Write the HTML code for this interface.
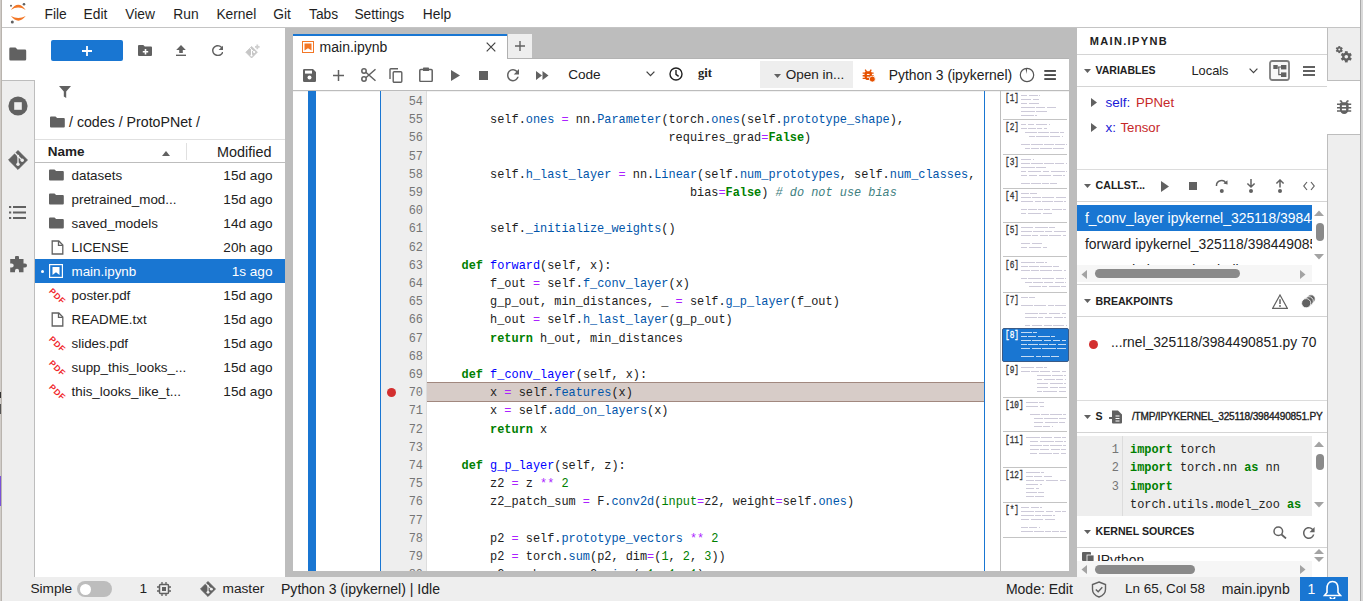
<!DOCTYPE html><html><head><meta charset="utf-8"><style>
html,body{margin:0;padding:0;}
body{width:1363px;height:601px;position:relative;overflow:hidden;background:#fff;font-family:"Liberation Sans",sans-serif;}
body div, body svg{position:absolute;}
body div svg{position:absolute;}
.cl{position:absolute;left:0;height:18.2px;line-height:18.2px;white-space:pre;font-family:"Liberation Mono",monospace;font-size:11.9px;color:#212121;}
.k{color:#008000;font-weight:bold}
.d{color:#0000ff}
.p{color:#0055aa}
.o{color:#aa22ff}
.n{color:#008000}
.c{color:#408080;font-style:italic}
.b{color:#008000}
</style></head><body>
<div style="left:0px;top:0px;width:1px;height:601px;background:#d0ccc8;"></div>
<div style="left:1px;top:0px;width:1px;height:601px;background:#b9b4ae;"></div>
<div style="left:1360px;top:0px;width:1px;height:601px;background:#a9a9a9;"></div>
<div style="left:1361px;top:0px;width:2px;height:601px;background:#d9d9d9;"></div>
<div style="left:0px;top:476px;width:1px;height:30px;background:#7a52d8;"></div>
<div style="left:0px;top:392px;width:1px;height:6px;background:#333;"></div>
<div style="left:0px;top:404px;width:1px;height:10px;background:#555;"></div>
<div style="left:2px;top:27px;width:1358px;height:1px;background:#c4c4c4;"></div>
<svg style="left:4px;top:0px;" width="28" height="28" viewBox="0 0 28 28">
<path d="M6.8 9.9 Q14.25 -0.4 21.7 9.9 Q14.25 5.2 6.8 9.9 Z" fill="#f37726"/>
<path d="M6.9 16.1 Q14.3 25.2 21.7 16.1 Q14.3 19.8 6.9 16.1 Z" fill="#f37726"/>
<circle cx="20" cy="4.2" r="1.3" fill="#616161"/>
<circle cx="7" cy="5.8" r="1" fill="#616161"/>
<circle cx="8.3" cy="21.9" r="1.5" fill="#616161"/>
</svg>
<div style="left:44.5px;top:4.72px;height:20px;line-height:20px;font-family:'Liberation Sans', sans-serif;font-size:13.8px;color:#1f1f1f;font-weight:normal;letter-spacing:0px;white-space:pre;text-align:left;">File</div>
<div style="left:83.6px;top:4.72px;height:20px;line-height:20px;font-family:'Liberation Sans', sans-serif;font-size:13.8px;color:#1f1f1f;font-weight:normal;letter-spacing:0px;white-space:pre;text-align:left;">Edit</div>
<div style="left:125.2px;top:4.72px;height:20px;line-height:20px;font-family:'Liberation Sans', sans-serif;font-size:13.8px;color:#1f1f1f;font-weight:normal;letter-spacing:0px;white-space:pre;text-align:left;">View</div>
<div style="left:173.3px;top:4.72px;height:20px;line-height:20px;font-family:'Liberation Sans', sans-serif;font-size:13.8px;color:#1f1f1f;font-weight:normal;letter-spacing:0px;white-space:pre;text-align:left;">Run</div>
<div style="left:216.4px;top:4.72px;height:20px;line-height:20px;font-family:'Liberation Sans', sans-serif;font-size:13.8px;color:#1f1f1f;font-weight:normal;letter-spacing:0px;white-space:pre;text-align:left;">Kernel</div>
<div style="left:273.3px;top:4.72px;height:20px;line-height:20px;font-family:'Liberation Sans', sans-serif;font-size:13.8px;color:#1f1f1f;font-weight:normal;letter-spacing:0px;white-space:pre;text-align:left;">Git</div>
<div style="left:309px;top:4.72px;height:20px;line-height:20px;font-family:'Liberation Sans', sans-serif;font-size:13.8px;color:#1f1f1f;font-weight:normal;letter-spacing:0px;white-space:pre;text-align:left;">Tabs</div>
<div style="left:354.4px;top:4.72px;height:20px;line-height:20px;font-family:'Liberation Sans', sans-serif;font-size:13.8px;color:#1f1f1f;font-weight:normal;letter-spacing:0px;white-space:pre;text-align:left;">Settings</div>
<div style="left:422.8px;top:4.72px;height:20px;line-height:20px;font-family:'Liberation Sans', sans-serif;font-size:13.8px;color:#1f1f1f;font-weight:normal;letter-spacing:0px;white-space:pre;text-align:left;">Help</div>
<div style="left:2px;top:80px;width:33px;height:497px;background:#eeeeee;"></div>
<div style="left:2px;top:80px;width:33px;height:1px;background:#bdbdbd;"></div>
<div style="left:34px;top:80px;width:1px;height:497px;background:#bdbdbd;"></div>
<svg style="left:9px;top:46px;" width="18" height="16" viewBox="0 0 18 16"><path d="M1.5 1.5 h5 l2 2 h7.5 a1.2 1.2 0 0 1 1.2 1.2 v8.6 a1.2 1.2 0 0 1 -1.2 1.2 h-14.5 a1.2 1.2 0 0 1 -1.2 -1.2 v-10.6 a1.2 1.2 0 0 1 1.2 -1.2z" fill="#616161"/></svg>
<svg style="left:8px;top:96px;" width="20" height="20" viewBox="0 0 20 20"><circle cx="10" cy="10" r="9.6" fill="#616161"/><rect x="6.2" y="6.2" width="7.6" height="7.6" fill="#eeeeee"/></svg>
<svg style="left:8px;top:150px;" width="20" height="20" viewBox="0 0 20 20"><path d="M10 0.6 L19.4 10 L10 19.4 L0.6 10 Z" fill="#616161" stroke="#616161" stroke-width="1" stroke-linejoin="round"/><path d="M6.8 2.8 L10 6 V14.2 M10 6 L14.2 10.2" stroke="#eeeeee" stroke-width="1.3" fill="none"/><circle cx="10" cy="6" r="1.2" fill="#eee"/><circle cx="10" cy="14.2" r="1.7" fill="#eee"/><circle cx="14.2" cy="10.2" r="1.7" fill="#eee"/></svg>
<svg style="left:9px;top:205px;" width="18" height="15" viewBox="0 0 18 15"><g fill="#616161"><rect x="0" y="1" width="2.2" height="2"/><rect x="4" y="1" width="13" height="2"/><rect x="0" y="6.5" width="2.2" height="2"/><rect x="4" y="6.5" width="13" height="2"/><rect x="0" y="12" width="2.2" height="2"/><rect x="4" y="12" width="13" height="2"/></g></svg>
<svg style="left:8px;top:256px;" width="19" height="19" viewBox="0 0 19 19"><path d="M7 1.5 a2 2 0 0 1 4 0 v1.5 h4.5 v4.5 h1.5 a2 2 0 0 1 0 4 h-1.5 v4.8 h-4.5 v-1.5 a2 2 0 0 0 -4 0 v1.5 h-4.8 v-4.8 h1.5 a2 2 0 0 0 0 -4 h-1.5 v-4.5 h4.8 z" fill="#616161"/></svg>
<div style="left:51px;top:40px;width:72px;height:21px;background:#1976d2;border-radius:2px;"></div>
<svg style="left:82px;top:46px;" width="10" height="10" viewBox="0 0 10 10"><path d="M5 0 V10 M0 5 H10" stroke="#fff" stroke-width="1.8"/></svg>
<svg style="left:138px;top:45px;" width="14" height="11" viewBox="0 0 14 11"><path d="M1 0 h4.3 l1.5 1.5 h6.2 a1 1 0 0 1 1 1 v7.5 a1 1 0 0 1 -1 1 h-12 a1 1 0 0 1 -1 -1 v-9 a1 1 0 0 1 1 -1z" fill="#616161"/><path d="M7.5 4 V9.4 M4.8 6.7 H10.2" stroke="#fff" stroke-width="1.6"/></svg>
<svg style="left:176px;top:45px;" width="10" height="11" viewBox="0 0 10 11"><path d="M5 0 L9.8 5 H6.8 V8 H3.2 V5 H0.2 Z" fill="#616161"/><rect x="0" y="9.6" width="10" height="1.4" fill="#616161"/></svg>
<svg style="left:211.5px;top:45.3px;" width="11.699999999999989" height="11.200000000000003" viewBox="4 4 16 16" preserveAspectRatio="none"><path d="M17.65 6.35A7.958 7.958 0 0 0 12 4c-4.42 0-7.99 3.58-7.99 8s3.57 8 7.99 8c3.73 0 6.84-2.55 7.73-6h-2.08A5.99 5.99 0 0 1 12 18c-3.31 0-6-2.69-6-6s2.69-6 6-6c1.66 0 3.14.69 4.22 1.78L13 11h7V4l-2.35 2.35z" fill="#616161" /></svg>
<svg style="left:245px;top:40px;" width="16" height="19" viewBox="0 0 16 19"><path d="M6.6 6.4 L12.4 12.2 L6.6 18 L0.8 12.2 Z" fill="#c6c6c6" stroke="#c6c6c6" stroke-width="0.8" stroke-linejoin="round"/><path d="M4.7 7.6 L6.5 9.4 V15.6 M6.5 9.4 L9.2 12.1" stroke="#fff" stroke-width="1" fill="none"/><circle cx="6.5" cy="15.5" r="1.1" fill="#fff"/><circle cx="9.2" cy="12.1" r="1.1" fill="#fff"/><path d="M12.3 4.6 V9.2 M10 6.9 H14.6" stroke="#cfcfcf" stroke-width="1.8"/></svg>
<svg style="left:59px;top:86px;" width="12" height="12" viewBox="0 0 12 12"><path d="M0 0 H12 L7.2 5.5 V12 L4.8 10.5 V5.5 Z" fill="#616161"/></svg>
<svg style="left:50px;top:116px;" width="15" height="12" viewBox="0 0 15 12"><path d="M1 0.5 h4.5 l1.6 1.6 h6.7 a1 1 0 0 1 1 1 v7.4 a1 1 0 0 1 -1 1 h-12.8 a1 1 0 0 1 -1 -1 v-9 a1 1 0 0 1 1 -1z" fill="#616161"/></svg>
<div style="left:69px;top:112.38px;height:20px;line-height:20px;font-family:'Liberation Sans', sans-serif;font-size:14.2px;color:#212121;font-weight:normal;letter-spacing:0px;white-space:pre;text-align:left;">/ codes / ProtoPNet /</div>
<div style="left:35px;top:139px;width:250px;height:1px;background:#e0e0e0;"></div>
<div style="left:35px;top:162px;width:250px;height:1px;background:#bdbdbd;"></div>
<div style="left:47.7px;top:141.92px;height:20px;line-height:20px;font-family:'Liberation Sans', sans-serif;font-size:13.5px;color:#212121;font-weight:bold;letter-spacing:0px;white-space:pre;text-align:left;">Name</div>
<svg style="left:162px;top:151px;" width="8" height="5" viewBox="0 0 8 5"><path d="M0 5 L4 0 L8 5 Z" fill="#616161"/></svg>
<div style="left:186px;top:143px;width:1px;height:17px;background:#e0e0e0;"></div>
<div style="left:217px;top:141.61px;height:20px;line-height:20px;font-family:'Liberation Sans', sans-serif;font-size:14.4px;color:#212121;font-weight:normal;letter-spacing:0px;white-space:pre;text-align:left;">Modified</div>
<svg style="left:49px;top:169px;" width="15" height="12" viewBox="0 0 15 12"><path d="M1 0.5 h4.5 l1.6 1.6 h6.7 a1 1 0 0 1 1 1 v7.4 a1 1 0 0 1 -1 1 h-12.8 a1 1 0 0 1 -1 -1 v-9 a1 1 0 0 1 1 -1z" fill="#616161"/></svg>
<div style="left:71.5px;top:165.66px;height:20px;line-height:20px;font-family:'Liberation Sans', sans-serif;font-size:13.4px;color:#212121;font-weight:normal;letter-spacing:0px;white-space:pre;text-align:left;">datasets</div>
<div style="left:180px;top:165.59px;width:92.5px;height:20px;line-height:20px;font-family:'Liberation Sans', sans-serif;font-size:13.6px;color:#212121;font-weight:normal;letter-spacing:0px;white-space:pre;text-align:right;">15d ago</div>
<svg style="left:49px;top:193px;" width="15" height="12" viewBox="0 0 15 12"><path d="M1 0.5 h4.5 l1.6 1.6 h6.7 a1 1 0 0 1 1 1 v7.4 a1 1 0 0 1 -1 1 h-12.8 a1 1 0 0 1 -1 -1 v-9 a1 1 0 0 1 1 -1z" fill="#616161"/></svg>
<div style="left:71.5px;top:189.66px;height:20px;line-height:20px;font-family:'Liberation Sans', sans-serif;font-size:13.4px;color:#212121;font-weight:normal;letter-spacing:0px;white-space:pre;text-align:left;">pretrained_mod...</div>
<div style="left:180px;top:189.59px;width:92.5px;height:20px;line-height:20px;font-family:'Liberation Sans', sans-serif;font-size:13.6px;color:#212121;font-weight:normal;letter-spacing:0px;white-space:pre;text-align:right;">15d ago</div>
<svg style="left:49px;top:217px;" width="15" height="12" viewBox="0 0 15 12"><path d="M1 0.5 h4.5 l1.6 1.6 h6.7 a1 1 0 0 1 1 1 v7.4 a1 1 0 0 1 -1 1 h-12.8 a1 1 0 0 1 -1 -1 v-9 a1 1 0 0 1 1 -1z" fill="#616161"/></svg>
<div style="left:71.5px;top:213.66px;height:20px;line-height:20px;font-family:'Liberation Sans', sans-serif;font-size:13.4px;color:#212121;font-weight:normal;letter-spacing:0px;white-space:pre;text-align:left;">saved_models</div>
<div style="left:180px;top:213.59px;width:92.5px;height:20px;line-height:20px;font-family:'Liberation Sans', sans-serif;font-size:13.6px;color:#212121;font-weight:normal;letter-spacing:0px;white-space:pre;text-align:right;">14d ago</div>
<svg style="left:51px;top:240px;" width="13" height="15" viewBox="0 0 13 15"><path d="M1.2 1 H7.8 L11.8 5 V14 H1.2 Z" fill="none" stroke="#616161" stroke-width="1.3"/><path d="M7.5 1 V5.3 H11.8" fill="none" stroke="#616161" stroke-width="1.3"/></svg>
<div style="left:71.5px;top:237.66px;height:20px;line-height:20px;font-family:'Liberation Sans', sans-serif;font-size:13.4px;color:#212121;font-weight:normal;letter-spacing:0px;white-space:pre;text-align:left;">LICENSE</div>
<div style="left:180px;top:237.59px;width:92.5px;height:20px;line-height:20px;font-family:'Liberation Sans', sans-serif;font-size:13.6px;color:#212121;font-weight:normal;letter-spacing:0px;white-space:pre;text-align:right;">20h ago</div>
<div style="left:35px;top:259px;width:250px;height:24px;background:#1976d2;"></div>
<div style="left:40.5px;top:269.5px;width:3px;height:3px;background:#fff;border-radius:50%;"></div>
<svg style="left:49px;top:264px;" width="14" height="14" viewBox="0 0 14 14"><rect x="0.6" y="0.6" width="12.8" height="12.8" fill="none" stroke="#fff" stroke-width="1.2"/><path d="M3.5 3 H10.5 V11 L7 8.2 L3.5 11 Z" fill="#fff"/></svg>
<div style="left:71.5px;top:261.66px;height:20px;line-height:20px;font-family:'Liberation Sans', sans-serif;font-size:13.4px;color:#ffffff;font-weight:normal;letter-spacing:0px;white-space:pre;text-align:left;">main.ipynb</div>
<div style="left:180px;top:261.59px;width:92.5px;height:20px;line-height:20px;font-family:'Liberation Sans', sans-serif;font-size:13.6px;color:#ffffff;font-weight:normal;letter-spacing:0px;white-space:pre;text-align:right;">1s ago</div>
<svg style="left:44px;top:283px;" width="24" height="24" viewBox="0 0 24 24"><text x="0" y="0" transform="translate(4.6,8.8) rotate(44)" font-family="Liberation Sans" font-weight="bold" font-size="8.6" letter-spacing="0.5" fill="#f0262b">PDF</text></svg>
<div style="left:71.5px;top:285.66px;height:20px;line-height:20px;font-family:'Liberation Sans', sans-serif;font-size:13.4px;color:#212121;font-weight:normal;letter-spacing:0px;white-space:pre;text-align:left;">poster.pdf</div>
<div style="left:180px;top:285.59px;width:92.5px;height:20px;line-height:20px;font-family:'Liberation Sans', sans-serif;font-size:13.6px;color:#212121;font-weight:normal;letter-spacing:0px;white-space:pre;text-align:right;">15d ago</div>
<svg style="left:51px;top:312px;" width="13" height="15" viewBox="0 0 13 15"><path d="M1.2 1 H7.8 L11.8 5 V14 H1.2 Z" fill="none" stroke="#616161" stroke-width="1.3"/><path d="M7.5 1 V5.3 H11.8" fill="none" stroke="#616161" stroke-width="1.3"/></svg>
<div style="left:71.5px;top:309.66px;height:20px;line-height:20px;font-family:'Liberation Sans', sans-serif;font-size:13.4px;color:#212121;font-weight:normal;letter-spacing:0px;white-space:pre;text-align:left;">README.txt</div>
<div style="left:180px;top:309.59px;width:92.5px;height:20px;line-height:20px;font-family:'Liberation Sans', sans-serif;font-size:13.6px;color:#212121;font-weight:normal;letter-spacing:0px;white-space:pre;text-align:right;">15d ago</div>
<svg style="left:44px;top:331px;" width="24" height="24" viewBox="0 0 24 24"><text x="0" y="0" transform="translate(4.6,8.8) rotate(44)" font-family="Liberation Sans" font-weight="bold" font-size="8.6" letter-spacing="0.5" fill="#f0262b">PDF</text></svg>
<div style="left:71.5px;top:333.66px;height:20px;line-height:20px;font-family:'Liberation Sans', sans-serif;font-size:13.4px;color:#212121;font-weight:normal;letter-spacing:0px;white-space:pre;text-align:left;">slides.pdf</div>
<div style="left:180px;top:333.59px;width:92.5px;height:20px;line-height:20px;font-family:'Liberation Sans', sans-serif;font-size:13.6px;color:#212121;font-weight:normal;letter-spacing:0px;white-space:pre;text-align:right;">15d ago</div>
<svg style="left:44px;top:355px;" width="24" height="24" viewBox="0 0 24 24"><text x="0" y="0" transform="translate(4.6,8.8) rotate(44)" font-family="Liberation Sans" font-weight="bold" font-size="8.6" letter-spacing="0.5" fill="#f0262b">PDF</text></svg>
<div style="left:71.5px;top:357.66px;height:20px;line-height:20px;font-family:'Liberation Sans', sans-serif;font-size:13.4px;color:#212121;font-weight:normal;letter-spacing:0px;white-space:pre;text-align:left;">supp_this_looks_...</div>
<div style="left:180px;top:357.59px;width:92.5px;height:20px;line-height:20px;font-family:'Liberation Sans', sans-serif;font-size:13.6px;color:#212121;font-weight:normal;letter-spacing:0px;white-space:pre;text-align:right;">15d ago</div>
<svg style="left:44px;top:379px;" width="24" height="24" viewBox="0 0 24 24"><text x="0" y="0" transform="translate(4.6,8.8) rotate(44)" font-family="Liberation Sans" font-weight="bold" font-size="8.6" letter-spacing="0.5" fill="#f0262b">PDF</text></svg>
<div style="left:71.5px;top:381.66px;height:20px;line-height:20px;font-family:'Liberation Sans', sans-serif;font-size:13.4px;color:#212121;font-weight:normal;letter-spacing:0px;white-space:pre;text-align:left;">this_looks_like_t...</div>
<div style="left:180px;top:381.59px;width:92.5px;height:20px;line-height:20px;font-family:'Liberation Sans', sans-serif;font-size:13.6px;color:#212121;font-weight:normal;letter-spacing:0px;white-space:pre;text-align:right;">15d ago</div>
<div style="left:285px;top:28px;width:792px;height:549px;background:#bdbdbd;"></div>
<div style="left:293px;top:34px;width:214px;height:25px;background:#ffffff;"></div>
<div style="left:293px;top:34px;width:214px;height:2px;background:#1976d2;"></div>
<svg style="left:302px;top:41px;" width="12" height="12" viewBox="0 0 12 12"><rect x="0.5" y="0.5" width="11" height="11" fill="none" stroke="#f37726" stroke-width="1"/><path d="M2.5 2.5 H9.5 V9.5 L6 7.2 L2.5 9.5 Z" fill="#f37726"/></svg>
<div style="left:319.6px;top:36.65px;height:20px;line-height:20px;font-family:'Liberation Sans', sans-serif;font-size:14px;color:#212121;font-weight:normal;letter-spacing:0px;white-space:pre;text-align:left;">main.ipynb</div>
<svg style="left:486px;top:42px;" width="10" height="10" viewBox="0 0 10 10"><path d="M0.7 0.7 L9.3 9.3 M9.3 0.7 L0.7 9.3" stroke="#424242" stroke-width="1.2"/></svg>
<div style="left:507px;top:34px;width:25px;height:24px;background:#eeeeee;box-sizing:border-box;border-left:1px solid #b0b0b0;"></div>
<div style="left:507px;top:58px;width:562px;height:1px;background:#b3b3b3;"></div>
<svg style="left:515px;top:41px;" width="10" height="10" viewBox="0 0 10 10"><path d="M5 0 V10 M0 5 H10" stroke="#616161" stroke-width="1.4"/></svg>
<div style="left:293px;top:59px;width:776px;height:512px;background:#ffffff;"></div>
<div style="left:293px;top:90px;width:776px;height:1px;background:#bcbcbc;"></div>
<div style="left:293px;top:91px;width:776px;height:1px;background:#f2f2f2;"></div>
<svg style="left:303px;top:69px;" width="13" height="13" viewBox="0 0 13 13"><path d="M0 1.2 a1.2 1.2 0 0 1 1.2 -1.2 h8.8 l3 3 v8.8 a1.2 1.2 0 0 1 -1.2 1.2 h-10.6 a1.2 1.2 0 0 1 -1.2 -1.2z" fill="#616161"/><rect x="2" y="1.6" width="7" height="3" fill="#fff"/><circle cx="6.5" cy="8.6" r="2" fill="#fff"/></svg>
<svg style="left:333px;top:70px;" width="11" height="11" viewBox="0 0 11 11"><path d="M5.5 0 V11 M0 5.5 H11" stroke="#616161" stroke-width="1.5"/></svg>
<svg style="left:361px;top:68px;" width="15" height="14" viewBox="0 0 15 14"><circle cx="3" cy="11" r="2.2" fill="none" stroke="#616161" stroke-width="1.5"/><circle cx="3" cy="3" r="2.2" fill="none" stroke="#616161" stroke-width="1.5"/><path d="M4.8 4.3 L14.5 12.8 M4.8 9.7 L14.5 1.2" stroke="#616161" stroke-width="1.5"/></svg>
<svg style="left:389px;top:68px;" width="14" height="15" viewBox="0 0 14 15"><path d="M1 11 V1.5 a0.8 0.8 0 0 1 .8 -.8 H9" fill="none" stroke="#616161" stroke-width="1.4"/><rect x="4.2" y="3.8" width="8.6" height="10.4" rx="1" fill="none" stroke="#616161" stroke-width="1.4"/></svg>
<svg style="left:419px;top:67px;" width="14" height="15" viewBox="0 0 14 15"><rect x="0.8" y="2.4" width="12.4" height="12" rx="1" fill="none" stroke="#616161" stroke-width="1.5"/><rect x="4" y="0.6" width="6" height="3.4" rx="0.6" fill="#616161"/></svg>
<svg style="left:451px;top:70px;" width="9" height="11" viewBox="0 0 9 11"><path d="M0 0 L9 5.5 L0 11 Z" fill="#616161"/></svg>
<div style="left:479px;top:71px;width:9px;height:9px;background:#616161;"></div>
<svg style="left:506.5px;top:69px;" width="12.0" height="12.5" viewBox="4 4 16 16" preserveAspectRatio="none"><path d="M17.65 6.35A7.958 7.958 0 0 0 12 4c-4.42 0-7.99 3.58-7.99 8s3.57 8 7.99 8c3.73 0 6.84-2.55 7.73-6h-2.08A5.99 5.99 0 0 1 12 18c-3.31 0-6-2.69-6-6s2.69-6 6-6c1.66 0 3.14.69 4.22 1.78L13 11h7V4l-2.35 2.35z" fill="#616161" /></svg>
<svg style="left:536px;top:71px;" width="13" height="9" viewBox="0 0 13 9"><path d="M0 0 L6 4.5 L0 9 Z M6.5 0 L12.5 4.5 L6.5 9 Z" fill="#616161"/></svg>
<div style="left:568.2px;top:65.29px;height:20px;line-height:20px;font-family:'Liberation Sans', sans-serif;font-size:13.6px;color:#212121;font-weight:normal;letter-spacing:0px;white-space:pre;text-align:left;">Code</div>
<svg style="left:646px;top:71px;" width="9" height="6" viewBox="0 0 9 6"><path d="M0.6 0.6 L4.5 4.6 L8.4 0.6" stroke="#424242" stroke-width="1.3" fill="none"/></svg>
<svg style="left:669px;top:67px;" width="14" height="14" viewBox="0 0 14 14"><circle cx="7" cy="7" r="6" fill="none" stroke="#212121" stroke-width="1.4"/><path d="M7 3 V7.4 L9.6 9.4" fill="none" stroke="#212121" stroke-width="1.4"/></svg>
<div style="left:698px;top:63px;height:20px;line-height:20px;font-family:'Liberation Serif',serif;font-weight:bold;font-size:12.5px;color:#212121;">git</div>
<div style="left:760px;top:61px;width:93px;height:27px;background:#eeeeee;"></div>
<svg style="left:774px;top:74px;" width="7" height="4" viewBox="0 0 7 4"><path d="M0 0 H7 L3.5 4 Z" fill="#616161"/></svg>
<div style="left:785.8px;top:65.32px;height:20px;line-height:20px;font-family:'Liberation Sans', sans-serif;font-size:13.5px;color:#212121;font-weight:normal;letter-spacing:0px;white-space:pre;text-align:left;">Open in...</div>
<svg style="left:862px;top:68px;" width="14" height="15" viewBox="0 0 14 15"><g transform="translate(0.3,0.6) scale(0.72)"><g fill="#e65100"><rect x="3.2" y="3.8" width="10" height="7" rx="2.5"/><ellipse cx="8.2" cy="10.6" rx="5" ry="5.4"/></g><g stroke="#e65100" stroke-width="1.9" fill="none"><path d="M0.5 6.2 H15.7 M0.5 10 H15.7 M0.5 13.6 H15.7"/><path d="M4 1.5 L6 4.5 M12.4 1.5 L10.4 4.5"/></g><rect x="6.4" y="7.4" width="3.6" height="1.5" fill="#fff"/><rect x="6.4" y="11.2" width="3.6" height="1.5" fill="#fff"/></g><circle cx="10.3" cy="11.1" r="3" fill="#e65100" stroke="#fff" stroke-width="0.8"/></svg>
<div style="left:888.7px;top:65.18px;height:20px;line-height:20px;font-family:'Liberation Sans', sans-serif;font-size:13.9px;color:#212121;font-weight:normal;letter-spacing:0px;white-space:pre;text-align:left;">Python 3 (ipykernel)</div>
<svg style="left:1019px;top:67px;" width="16" height="16" viewBox="0 0 16 16"><circle cx="8" cy="8" r="6.7" fill="none" stroke="#555" stroke-width="1.2"/><path d="M6.6 1.5 L8.2 1.3 L7.5 7 Z" fill="#555"/></svg>
<svg style="left:1044px;top:69px;" width="13" height="12" viewBox="0 0 13 12"><rect x="0.3" y="1" width="11.6" height="1.9" fill="#4a4a4a"/><rect x="0.3" y="5.1" width="11.6" height="1.9" fill="#4a4a4a"/><rect x="0.3" y="9.1" width="11.6" height="1.9" fill="#4a4a4a"/></svg>
<div style="left:308px;top:91px;width:8px;height:480px;background:#1976d2;"></div>
<div style="left:380px;top:91px;width:1px;height:480px;background:#1976d2;"></div>
<div style="left:984px;top:91px;width:1px;height:480px;background:#1976d2;"></div>
<div style="left:381px;top:91px;width:46px;height:480px;background:#eeeeee;"></div>
<div style="left:426px;top:91px;width:1px;height:480px;background:#dddddd;"></div>
<div style="left:1000px;top:91px;width:1px;height:480px;background:#bdbdbd;"></div>
<div style="left:427px;top:382px;width:557px;height:20px;background:#d7ccc8;box-sizing:border-box;border-top:1px solid #a1887f;border-bottom:1px solid #a1887f;"></div>
<div style="left:381px;top:91px;width:603px;height:480px;overflow:hidden;">
<div class="cl" style="top:1.90px;left:0;width:42px;text-align:right;color:#757575;">54</div>
<div class="cl" style="top:1.90px;left:52px;"></div>
<div class="cl" style="top:20.10px;left:0;width:42px;text-align:right;color:#757575;">55</div>
<div class="cl" style="top:20.10px;left:52px;">        <span>self</span>.<span class="p">ones</span> <span class="o">=</span> nn.<span class="p">Parameter</span>(torch.<span class="p">ones</span>(self.<span class="p">prototype_shape</span>),</div>
<div class="cl" style="top:38.30px;left:0;width:42px;text-align:right;color:#757575;">56</div>
<div class="cl" style="top:38.30px;left:52px;">                                 requires_grad<span class="o">=</span><span class="k">False</span>)</div>
<div class="cl" style="top:56.50px;left:0;width:42px;text-align:right;color:#757575;">57</div>
<div class="cl" style="top:56.50px;left:52px;"></div>
<div class="cl" style="top:74.70px;left:0;width:42px;text-align:right;color:#757575;">58</div>
<div class="cl" style="top:74.70px;left:52px;">        self.<span class="p">h_last_layer</span> <span class="o">=</span> nn.<span class="p">Linear</span>(self.<span class="p">num_prototypes</span>, self.<span class="p">num_classes</span>,</div>
<div class="cl" style="top:92.90px;left:0;width:42px;text-align:right;color:#757575;">59</div>
<div class="cl" style="top:92.90px;left:52px;">                                    bias<span class="o">=</span><span class="k">False</span>) <span class="c"># do not use bias</span></div>
<div class="cl" style="top:111.10px;left:0;width:42px;text-align:right;color:#757575;">60</div>
<div class="cl" style="top:111.10px;left:52px;"></div>
<div class="cl" style="top:129.30px;left:0;width:42px;text-align:right;color:#757575;">61</div>
<div class="cl" style="top:129.30px;left:52px;">        self.<span class="p">_initialize_weights</span>()</div>
<div class="cl" style="top:147.50px;left:0;width:42px;text-align:right;color:#757575;">62</div>
<div class="cl" style="top:147.50px;left:52px;"></div>
<div class="cl" style="top:165.70px;left:0;width:42px;text-align:right;color:#757575;">63</div>
<div class="cl" style="top:165.70px;left:52px;">    <span class="k">def</span> <span class="d">forward</span>(self, x):</div>
<div class="cl" style="top:183.90px;left:0;width:42px;text-align:right;color:#757575;">64</div>
<div class="cl" style="top:183.90px;left:52px;">        f_out <span class="o">=</span> self.<span class="p">f_conv_layer</span>(x)</div>
<div class="cl" style="top:202.10px;left:0;width:42px;text-align:right;color:#757575;">65</div>
<div class="cl" style="top:202.10px;left:52px;">        g_p_out, min_distances, _ <span class="o">=</span> self.<span class="p">g_p_layer</span>(f_out)</div>
<div class="cl" style="top:220.30px;left:0;width:42px;text-align:right;color:#757575;">66</div>
<div class="cl" style="top:220.30px;left:52px;">        h_out <span class="o">=</span> self.<span class="p">h_last_layer</span>(g_p_out)</div>
<div class="cl" style="top:238.50px;left:0;width:42px;text-align:right;color:#757575;">67</div>
<div class="cl" style="top:238.50px;left:52px;">        <span class="k">return</span> h_out, min_distances</div>
<div class="cl" style="top:256.70px;left:0;width:42px;text-align:right;color:#757575;">68</div>
<div class="cl" style="top:256.70px;left:52px;"></div>
<div class="cl" style="top:274.90px;left:0;width:42px;text-align:right;color:#757575;">69</div>
<div class="cl" style="top:274.90px;left:52px;">    <span class="k">def</span> <span class="d">f_conv_layer</span>(self, x):</div>
<div class="cl" style="top:293.10px;left:0;width:42px;text-align:right;color:#757575;">70</div>
<div class="cl" style="top:293.10px;left:52px;">        x <span class="o">=</span> self.<span class="p">features</span>(x)</div>
<div class="cl" style="top:311.30px;left:0;width:42px;text-align:right;color:#757575;">71</div>
<div class="cl" style="top:311.30px;left:52px;">        x <span class="o">=</span> self.<span class="p">add_on_layers</span>(x)</div>
<div class="cl" style="top:329.50px;left:0;width:42px;text-align:right;color:#757575;">72</div>
<div class="cl" style="top:329.50px;left:52px;">        <span class="k">return</span> x</div>
<div class="cl" style="top:347.70px;left:0;width:42px;text-align:right;color:#757575;">73</div>
<div class="cl" style="top:347.70px;left:52px;"></div>
<div class="cl" style="top:365.90px;left:0;width:42px;text-align:right;color:#757575;">74</div>
<div class="cl" style="top:365.90px;left:52px;">    <span class="k">def</span> <span class="d">g_p_layer</span>(self, z):</div>
<div class="cl" style="top:384.10px;left:0;width:42px;text-align:right;color:#757575;">75</div>
<div class="cl" style="top:384.10px;left:52px;">        z2 <span class="o">=</span> z <span class="o">**</span> <span class="n">2</span></div>
<div class="cl" style="top:402.30px;left:0;width:42px;text-align:right;color:#757575;">76</div>
<div class="cl" style="top:402.30px;left:52px;">        z2_patch_sum <span class="o">=</span> F.<span class="p">conv2d</span>(<span class="b">input</span><span class="o">=</span>z2, weight<span class="o">=</span>self.<span class="p">ones</span>)</div>
<div class="cl" style="top:420.50px;left:0;width:42px;text-align:right;color:#757575;">77</div>
<div class="cl" style="top:420.50px;left:52px;"></div>
<div class="cl" style="top:438.70px;left:0;width:42px;text-align:right;color:#757575;">78</div>
<div class="cl" style="top:438.70px;left:52px;">        p2 <span class="o">=</span> self.<span class="p">prototype_vectors</span> <span class="o">**</span> <span class="n">2</span></div>
<div class="cl" style="top:456.90px;left:0;width:42px;text-align:right;color:#757575;">79</div>
<div class="cl" style="top:456.90px;left:52px;">        p2 <span class="o">=</span> torch.<span class="p">sum</span>(p2, dim<span class="o">=</span>(<span class="n">1</span>, <span class="n">2</span>, <span class="n">3</span>))</div>
<div class="cl" style="top:475.10px;left:0;width:42px;text-align:right;color:#757575;">80</div>
<div class="cl" style="top:475.10px;left:52px;">        p2_reshape <span class="o">=</span> p2.<span class="p">view</span>(<span class="o">-</span><span class="n">1</span>, <span class="n">1</span>, <span class="n">1</span>)</div>
</div>
<div style="left:387px;top:388px;width:9px;height:9px;background:#d32f2f;border-radius:50%;"></div>
<div style="left:1003px;top:119px;width:64px;height:1px;background:#c4c4c4;"></div>
<div style="left:1003px;top:154px;width:64px;height:1px;background:#c4c4c4;"></div>
<div style="left:1003px;top:188px;width:64px;height:1px;background:#c4c4c4;"></div>
<div style="left:1003px;top:222px;width:64px;height:1px;background:#c4c4c4;"></div>
<div style="left:1003px;top:256px;width:64px;height:1px;background:#c4c4c4;"></div>
<div style="left:1003px;top:292px;width:64px;height:1px;background:#c4c4c4;"></div>
<div style="left:1003px;top:397px;width:64px;height:1px;background:#c4c4c4;"></div>
<div style="left:1003px;top:431px;width:64px;height:1px;background:#c4c4c4;"></div>
<div style="left:1003px;top:467px;width:64px;height:1px;background:#c4c4c4;"></div>
<div style="left:1003px;top:502px;width:64px;height:1px;background:#c4c4c4;"></div>
<div style="left:1003px;top:537px;width:64px;height:1px;background:#c4c4c4;"></div>
<div style="left:1002px;top:328px;width:67px;height:34px;background:#1976d2;box-sizing:border-box;border:1px solid #3a5a86;border-radius:2px;"></div>
<div style="left:1004.5px;top:92.7px;height:11px;line-height:11px;font-family:'Liberation Mono',monospace;font-size:10.8px;color:#333333;transform:scaleX(0.72);transform-origin:0 0;-webkit-text-stroke:0.3px #333333;">[1]</div>
<div style="left:1021px;top:94.6px;width:6.3px;height:1.1px;background:rgba(90,80,130,0.30);"></div>
<div style="left:1028.6px;top:94.6px;width:9.1px;height:1.1px;background:rgba(90,80,130,0.30);"></div>
<div style="left:1039.0px;top:94.6px;width:0.2px;height:1.1px;background:rgba(90,80,130,0.30);"></div>
<div style="left:1021px;top:98.6px;width:10.2px;height:1.1px;background:rgba(90,80,130,0.30);"></div>
<div style="left:1032.5px;top:98.6px;width:6.8px;height:1.1px;background:rgba(90,80,130,0.30);"></div>
<div style="left:1021px;top:102.7px;width:6.3px;height:1.1px;background:rgba(90,80,130,0.30);"></div>
<div style="left:1028.6px;top:102.7px;width:10.5px;height:1.1px;background:rgba(90,80,130,0.30);"></div>
<div style="left:1040.5px;top:102.7px;width:0.0px;height:1.1px;background:rgba(90,80,130,0.30);"></div>
<div style="left:1021px;top:106.8px;width:13.8px;height:1.1px;background:rgba(90,80,130,0.30);"></div>
<div style="left:1036.1px;top:106.8px;width:9.1px;height:1.1px;background:rgba(90,80,130,0.30);"></div>
<div style="left:1046.5px;top:106.8px;width:9.6px;height:1.1px;background:rgba(90,80,130,0.30);"></div>
<div style="left:1021px;top:110.8px;width:13.6px;height:1.1px;background:rgba(90,80,130,0.30);"></div>
<div style="left:1035.9px;top:110.8px;width:11.1px;height:1.1px;background:rgba(90,80,130,0.30);"></div>
<div style="left:1021px;top:114.8px;width:12.9px;height:1.1px;background:rgba(90,80,130,0.30);"></div>
<div style="left:1035.2px;top:114.8px;width:1.4px;height:1.1px;background:rgba(90,80,130,0.30);"></div>
<div style="left:1004.5px;top:121.7px;height:11px;line-height:11px;font-family:'Liberation Mono',monospace;font-size:10.8px;color:#333333;transform:scaleX(0.72);transform-origin:0 0;-webkit-text-stroke:0.3px #333333;">[2]</div>
<div style="left:1021px;top:123.6px;width:5.4px;height:1.1px;background:rgba(90,80,130,0.30);"></div>
<div style="left:1027.7px;top:123.6px;width:6.8px;height:1.1px;background:rgba(90,80,130,0.30);"></div>
<div style="left:1035.8px;top:123.6px;width:11.4px;height:1.1px;background:rgba(90,80,130,0.30);"></div>
<div style="left:1048.5px;top:123.6px;width:1.1px;height:1.1px;background:rgba(90,80,130,0.30);"></div>
<div style="left:1021px;top:127.6px;width:5.6px;height:1.1px;background:rgba(90,80,130,0.30);"></div>
<div style="left:1027.9px;top:127.6px;width:7.9px;height:1.1px;background:rgba(90,80,130,0.30);"></div>
<div style="left:1037.1px;top:127.6px;width:5.0px;height:1.1px;background:rgba(90,80,130,0.30);"></div>
<div style="left:1043.5px;top:127.6px;width:3.5px;height:1.1px;background:rgba(90,80,130,0.30);"></div>
<div style="left:1025px;top:131.7px;width:11.9px;height:1.1px;background:rgba(90,80,130,0.30);"></div>
<div style="left:1038.2px;top:131.7px;width:10.8px;height:1.1px;background:rgba(90,80,130,0.30);"></div>
<div style="left:1050.3px;top:131.7px;width:8.7px;height:1.1px;background:rgba(90,80,130,0.30);"></div>
<div style="left:1060.3px;top:131.7px;width:3.7px;height:1.1px;background:rgba(90,80,130,0.30);"></div>
<div style="left:1029px;top:135.8px;width:5.8px;height:1.1px;background:rgba(90,80,130,0.30);"></div>
<div style="left:1036.1px;top:135.8px;width:12.6px;height:1.1px;background:rgba(90,80,130,0.30);"></div>
<div style="left:1050.0px;top:135.8px;width:10.4px;height:1.1px;background:rgba(90,80,130,0.30);"></div>
<div style="left:1061.7px;top:135.8px;width:1.1px;height:1.1px;background:rgba(90,80,130,0.30);"></div>
<div style="left:1021px;top:143.8px;width:8.9px;height:1.1px;background:rgba(90,80,130,0.30);"></div>
<div style="left:1031.2px;top:143.8px;width:11.5px;height:1.1px;background:rgba(90,80,130,0.30);"></div>
<div style="left:1044.0px;top:143.8px;width:9.8px;height:1.1px;background:rgba(90,80,130,0.30);"></div>
<div style="left:1055.2px;top:143.8px;width:9.5px;height:1.1px;background:rgba(90,80,130,0.30);"></div>
<div style="left:1065.9px;top:143.8px;width:0.1px;height:1.1px;background:rgba(90,80,130,0.30);"></div>
<div style="left:1025px;top:147.9px;width:5.1px;height:1.1px;background:rgba(90,80,130,0.30);"></div>
<div style="left:1031.4px;top:147.9px;width:7.7px;height:1.1px;background:rgba(90,80,130,0.30);"></div>
<div style="left:1040.4px;top:147.9px;width:11.6px;height:1.1px;background:rgba(90,80,130,0.30);"></div>
<div style="left:1053.3px;top:147.9px;width:10.7px;height:1.1px;background:rgba(90,80,130,0.30);"></div>
<div style="left:1004.5px;top:156.7px;height:11px;line-height:11px;font-family:'Liberation Mono',monospace;font-size:10.8px;color:#333333;transform:scaleX(0.72);transform-origin:0 0;-webkit-text-stroke:0.3px #333333;">[3]</div>
<div style="left:1021px;top:158.6px;width:10.4px;height:1.1px;background:rgba(90,80,130,0.30);"></div>
<div style="left:1032.7px;top:158.6px;width:1.3px;height:1.1px;background:rgba(90,80,130,0.30);"></div>
<div style="left:1021px;top:162.7px;width:8.6px;height:1.1px;background:rgba(90,80,130,0.30);"></div>
<div style="left:1030.9px;top:162.7px;width:12.2px;height:1.1px;background:rgba(90,80,130,0.30);"></div>
<div style="left:1044.4px;top:162.7px;width:9.4px;height:1.1px;background:rgba(90,80,130,0.30);"></div>
<div style="left:1055.1px;top:162.7px;width:9.1px;height:1.1px;background:rgba(90,80,130,0.30);"></div>
<div style="left:1065.6px;top:162.7px;width:0.4px;height:1.1px;background:rgba(90,80,130,0.30);"></div>
<div style="left:1021px;top:166.7px;width:13.7px;height:1.1px;background:rgba(90,80,130,0.30);"></div>
<div style="left:1036.0px;top:166.7px;width:9.9px;height:1.1px;background:rgba(90,80,130,0.30);"></div>
<div style="left:1021px;top:170.8px;width:5.3px;height:1.1px;background:rgba(90,80,130,0.30);"></div>
<div style="left:1027.6px;top:170.8px;width:13.7px;height:1.1px;background:rgba(90,80,130,0.30);"></div>
<div style="left:1042.6px;top:170.8px;width:6.8px;height:1.1px;background:rgba(90,80,130,0.30);"></div>
<div style="left:1050.7px;top:170.8px;width:13.9px;height:1.1px;background:rgba(90,80,130,0.30);"></div>
<div style="left:1065.9px;top:170.8px;width:0.1px;height:1.1px;background:rgba(90,80,130,0.30);"></div>
<div style="left:1021px;top:174.8px;width:6.2px;height:1.1px;background:rgba(90,80,130,0.30);"></div>
<div style="left:1028.5px;top:174.8px;width:8.8px;height:1.1px;background:rgba(90,80,130,0.30);"></div>
<div style="left:1038.6px;top:174.8px;width:12.7px;height:1.1px;background:rgba(90,80,130,0.30);"></div>
<div style="left:1052.6px;top:174.8px;width:9.1px;height:1.1px;background:rgba(90,80,130,0.30);"></div>
<div style="left:1063.0px;top:174.8px;width:2.2px;height:1.1px;background:rgba(90,80,130,0.30);"></div>
<div style="left:1021px;top:182.9px;width:8.9px;height:1.1px;background:rgba(90,80,130,0.30);"></div>
<div style="left:1031.2px;top:182.9px;width:9.7px;height:1.1px;background:rgba(90,80,130,0.30);"></div>
<div style="left:1042.2px;top:182.9px;width:6.7px;height:1.1px;background:rgba(90,80,130,0.30);"></div>
<div style="left:1050.2px;top:182.9px;width:7.2px;height:1.1px;background:rgba(90,80,130,0.30);"></div>
<div style="left:1004.5px;top:190.7px;height:11px;line-height:11px;font-family:'Liberation Mono',monospace;font-size:10.8px;color:#333333;transform:scaleX(0.72);transform-origin:0 0;-webkit-text-stroke:0.3px #333333;">[4]</div>
<div style="left:1021px;top:192.6px;width:7.8px;height:1.1px;background:rgba(90,80,130,0.30);"></div>
<div style="left:1030.1px;top:192.6px;width:6.5px;height:1.1px;background:rgba(90,80,130,0.30);"></div>
<div style="left:1021px;top:196.7px;width:9.5px;height:1.1px;background:rgba(90,80,130,0.30);"></div>
<div style="left:1031.8px;top:196.7px;width:8.8px;height:1.1px;background:rgba(90,80,130,0.30);"></div>
<div style="left:1041.9px;top:196.7px;width:12.4px;height:1.1px;background:rgba(90,80,130,0.30);"></div>
<div style="left:1055.6px;top:196.7px;width:10.4px;height:1.1px;background:rgba(90,80,130,0.30);"></div>
<div style="left:1021px;top:200.7px;width:12.4px;height:1.1px;background:rgba(90,80,130,0.30);"></div>
<div style="left:1034.7px;top:200.7px;width:5.9px;height:1.1px;background:rgba(90,80,130,0.30);"></div>
<div style="left:1041.9px;top:200.7px;width:10.8px;height:1.1px;background:rgba(90,80,130,0.30);"></div>
<div style="left:1054.0px;top:200.7px;width:8.7px;height:1.1px;background:rgba(90,80,130,0.30);"></div>
<div style="left:1063.9px;top:200.7px;width:2.1px;height:1.1px;background:rgba(90,80,130,0.30);"></div>
<div style="left:1021px;top:208.8px;width:5.8px;height:1.1px;background:rgba(90,80,130,0.30);"></div>
<div style="left:1028.1px;top:208.8px;width:8.7px;height:1.1px;background:rgba(90,80,130,0.30);"></div>
<div style="left:1038.0px;top:208.8px;width:5.0px;height:1.1px;background:rgba(90,80,130,0.30);"></div>
<div style="left:1044.4px;top:208.8px;width:5.8px;height:1.1px;background:rgba(90,80,130,0.30);"></div>
<div style="left:1051.5px;top:208.8px;width:10.4px;height:1.1px;background:rgba(90,80,130,0.30);"></div>
<div style="left:1063.2px;top:208.8px;width:2.8px;height:1.1px;background:rgba(90,80,130,0.30);"></div>
<div style="left:1021px;top:212.8px;width:5.4px;height:1.1px;background:rgba(90,80,130,0.30);"></div>
<div style="left:1027.7px;top:212.8px;width:13.7px;height:1.1px;background:rgba(90,80,130,0.30);"></div>
<div style="left:1042.7px;top:212.8px;width:9.5px;height:1.1px;background:rgba(90,80,130,0.30);"></div>
<div style="left:1004.5px;top:224.7px;height:11px;line-height:11px;font-family:'Liberation Mono',monospace;font-size:10.8px;color:#333333;transform:scaleX(0.72);transform-origin:0 0;-webkit-text-stroke:0.3px #333333;">[5]</div>
<div style="left:1021px;top:226.6px;width:12.2px;height:1.1px;background:rgba(90,80,130,0.30);"></div>
<div style="left:1034.5px;top:226.6px;width:13.5px;height:1.1px;background:rgba(90,80,130,0.30);"></div>
<div style="left:1049.3px;top:226.6px;width:5.5px;height:1.1px;background:rgba(90,80,130,0.30);"></div>
<div style="left:1021px;top:230.7px;width:10.8px;height:1.1px;background:rgba(90,80,130,0.30);"></div>
<div style="left:1033.1px;top:230.7px;width:10.7px;height:1.1px;background:rgba(90,80,130,0.30);"></div>
<div style="left:1045.0px;top:230.7px;width:7.2px;height:1.1px;background:rgba(90,80,130,0.30);"></div>
<div style="left:1053.5px;top:230.7px;width:12.3px;height:1.1px;background:rgba(90,80,130,0.30);"></div>
<div style="left:1021px;top:234.7px;width:9.5px;height:1.1px;background:rgba(90,80,130,0.30);"></div>
<div style="left:1031.8px;top:234.7px;width:6.5px;height:1.1px;background:rgba(90,80,130,0.30);"></div>
<div style="left:1039.7px;top:234.7px;width:8.2px;height:1.1px;background:rgba(90,80,130,0.30);"></div>
<div style="left:1049.1px;top:234.7px;width:12.3px;height:1.1px;background:rgba(90,80,130,0.30);"></div>
<div style="left:1062.7px;top:234.7px;width:3.3px;height:1.1px;background:rgba(90,80,130,0.30);"></div>
<div style="left:1021px;top:242.8px;width:9.2px;height:1.1px;background:rgba(90,80,130,0.30);"></div>
<div style="left:1031.5px;top:242.8px;width:10.1px;height:1.1px;background:rgba(90,80,130,0.30);"></div>
<div style="left:1021px;top:246.8px;width:6.3px;height:1.1px;background:rgba(90,80,130,0.30);"></div>
<div style="left:1028.6px;top:246.8px;width:12.6px;height:1.1px;background:rgba(90,80,130,0.30);"></div>
<div style="left:1042.5px;top:246.8px;width:4.5px;height:1.1px;background:rgba(90,80,130,0.30);"></div>
<div style="left:1004.5px;top:259.7px;height:11px;line-height:11px;font-family:'Liberation Mono',monospace;font-size:10.8px;color:#333333;transform:scaleX(0.72);transform-origin:0 0;-webkit-text-stroke:0.3px #333333;">[6]</div>
<div style="left:1021px;top:261.6px;width:13.5px;height:1.1px;background:rgba(90,80,130,0.30);"></div>
<div style="left:1035.8px;top:261.6px;width:8.1px;height:1.1px;background:rgba(90,80,130,0.30);"></div>
<div style="left:1045.2px;top:261.6px;width:1.8px;height:1.1px;background:rgba(90,80,130,0.30);"></div>
<div style="left:1021px;top:265.7px;width:6.7px;height:1.1px;background:rgba(90,80,130,0.30);"></div>
<div style="left:1029.0px;top:265.7px;width:10.1px;height:1.1px;background:rgba(90,80,130,0.30);"></div>
<div style="left:1040.4px;top:265.7px;width:11.6px;height:1.1px;background:rgba(90,80,130,0.30);"></div>
<div style="left:1053.3px;top:265.7px;width:6.0px;height:1.1px;background:rgba(90,80,130,0.30);"></div>
<div style="left:1021px;top:269.7px;width:8.6px;height:1.1px;background:rgba(90,80,130,0.30);"></div>
<div style="left:1030.9px;top:269.7px;width:8.0px;height:1.1px;background:rgba(90,80,130,0.30);"></div>
<div style="left:1040.2px;top:269.7px;width:11.6px;height:1.1px;background:rgba(90,80,130,0.30);"></div>
<div style="left:1053.1px;top:269.7px;width:9.2px;height:1.1px;background:rgba(90,80,130,0.30);"></div>
<div style="left:1063.6px;top:269.7px;width:2.4px;height:1.1px;background:rgba(90,80,130,0.30);"></div>
<div style="left:1021px;top:277.8px;width:5.6px;height:1.1px;background:rgba(90,80,130,0.30);"></div>
<div style="left:1027.9px;top:277.8px;width:13.2px;height:1.1px;background:rgba(90,80,130,0.30);"></div>
<div style="left:1042.4px;top:277.8px;width:11.9px;height:1.1px;background:rgba(90,80,130,0.30);"></div>
<div style="left:1055.6px;top:277.8px;width:8.3px;height:1.1px;background:rgba(90,80,130,0.30);"></div>
<div style="left:1065.2px;top:277.8px;width:0.8px;height:1.1px;background:rgba(90,80,130,0.30);"></div>
<div style="left:1025px;top:281.9px;width:6.5px;height:1.1px;background:rgba(90,80,130,0.30);"></div>
<div style="left:1032.8px;top:281.9px;width:10.2px;height:1.1px;background:rgba(90,80,130,0.30);"></div>
<div style="left:1044.3px;top:281.9px;width:8.9px;height:1.1px;background:rgba(90,80,130,0.30);"></div>
<div style="left:1054.5px;top:281.9px;width:9.5px;height:1.1px;background:rgba(90,80,130,0.30);"></div>
<div style="left:1065.3px;top:281.9px;width:0.7px;height:1.1px;background:rgba(90,80,130,0.30);"></div>
<div style="left:1029px;top:285.9px;width:11.6px;height:1.1px;background:rgba(90,80,130,0.30);"></div>
<div style="left:1041.9px;top:285.9px;width:5.5px;height:1.1px;background:rgba(90,80,130,0.30);"></div>
<div style="left:1048.7px;top:285.9px;width:11.0px;height:1.1px;background:rgba(90,80,130,0.30);"></div>
<div style="left:1061.0px;top:285.9px;width:5.0px;height:1.1px;background:rgba(90,80,130,0.30);"></div>
<div style="left:1004.5px;top:294.7px;height:11px;line-height:11px;font-family:'Liberation Mono',monospace;font-size:10.8px;color:#333333;transform:scaleX(0.72);transform-origin:0 0;-webkit-text-stroke:0.3px #333333;">[7]</div>
<div style="left:1021px;top:296.6px;width:6.5px;height:1.1px;background:rgba(90,80,130,0.30);"></div>
<div style="left:1028.8px;top:296.6px;width:6.7px;height:1.1px;background:rgba(90,80,130,0.30);"></div>
<div style="left:1021px;top:304.7px;width:11.9px;height:1.1px;background:rgba(90,80,130,0.30);"></div>
<div style="left:1034.2px;top:304.7px;width:12.1px;height:1.1px;background:rgba(90,80,130,0.30);"></div>
<div style="left:1047.6px;top:304.7px;width:6.2px;height:1.1px;background:rgba(90,80,130,0.30);"></div>
<div style="left:1055.2px;top:304.7px;width:10.8px;height:1.1px;background:rgba(90,80,130,0.30);"></div>
<div style="left:1025px;top:312.8px;width:12.6px;height:1.1px;background:rgba(90,80,130,0.30);"></div>
<div style="left:1038.9px;top:312.8px;width:8.4px;height:1.1px;background:rgba(90,80,130,0.30);"></div>
<div style="left:1048.5px;top:312.8px;width:11.7px;height:1.1px;background:rgba(90,80,130,0.30);"></div>
<div style="left:1061.5px;top:312.8px;width:4.5px;height:1.1px;background:rgba(90,80,130,0.30);"></div>
<div style="left:1025px;top:316.9px;width:12.0px;height:1.1px;background:rgba(90,80,130,0.30);"></div>
<div style="left:1038.3px;top:316.9px;width:5.1px;height:1.1px;background:rgba(90,80,130,0.30);"></div>
<div style="left:1044.7px;top:316.9px;width:7.8px;height:1.1px;background:rgba(90,80,130,0.30);"></div>
<div style="left:1053.8px;top:316.9px;width:8.9px;height:1.1px;background:rgba(90,80,130,0.30);"></div>
<div style="left:1063.9px;top:316.9px;width:2.1px;height:1.1px;background:rgba(90,80,130,0.30);"></div>
<div style="left:1025px;top:325.0px;width:5.2px;height:1.1px;background:rgba(90,80,130,0.30);"></div>
<div style="left:1031.5px;top:325.0px;width:10.7px;height:1.1px;background:rgba(90,80,130,0.30);"></div>
<div style="left:1043.5px;top:325.0px;width:8.0px;height:1.1px;background:rgba(90,80,130,0.30);"></div>
<div style="left:1052.8px;top:325.0px;width:11.7px;height:1.1px;background:rgba(90,80,130,0.30);"></div>
<div style="left:1065.8px;top:325.0px;width:0.2px;height:1.1px;background:rgba(90,80,130,0.30);"></div>
<div style="left:1004.5px;top:329.7px;height:11px;line-height:11px;font-family:'Liberation Mono',monospace;font-size:10.8px;color:#ffffff;transform:scaleX(0.72);transform-origin:0 0;-webkit-text-stroke:0.3px #ffffff;">[8]</div>
<div style="left:1021px;top:331.6px;width:11.0px;height:1.1px;background:rgba(255,255,255,0.75);"></div>
<div style="left:1033.3px;top:331.6px;width:3.3px;height:1.1px;background:rgba(255,255,255,0.75);"></div>
<div style="left:1021px;top:335.7px;width:5.9px;height:1.1px;background:rgba(255,255,255,0.75);"></div>
<div style="left:1028.2px;top:335.7px;width:8.2px;height:1.1px;background:rgba(255,255,255,0.75);"></div>
<div style="left:1037.7px;top:335.7px;width:12.2px;height:1.1px;background:rgba(255,255,255,0.75);"></div>
<div style="left:1051.3px;top:335.7px;width:3.5px;height:1.1px;background:rgba(255,255,255,0.75);"></div>
<div style="left:1021px;top:339.7px;width:9.9px;height:1.1px;background:rgba(255,255,255,0.75);"></div>
<div style="left:1032.2px;top:339.7px;width:10.0px;height:1.1px;background:rgba(255,255,255,0.75);"></div>
<div style="left:1043.5px;top:339.7px;width:7.9px;height:1.1px;background:rgba(255,255,255,0.75);"></div>
<div style="left:1052.7px;top:339.7px;width:7.8px;height:1.1px;background:rgba(255,255,255,0.75);"></div>
<div style="left:1061.8px;top:339.7px;width:4.2px;height:1.1px;background:rgba(255,255,255,0.75);"></div>
<div style="left:1021px;top:343.8px;width:6.0px;height:1.1px;background:rgba(255,255,255,0.75);"></div>
<div style="left:1028.3px;top:343.8px;width:9.4px;height:1.1px;background:rgba(255,255,255,0.75);"></div>
<div style="left:1039.0px;top:343.8px;width:8.7px;height:1.1px;background:rgba(255,255,255,0.75);"></div>
<div style="left:1048.9px;top:343.8px;width:7.2px;height:1.1px;background:rgba(255,255,255,0.75);"></div>
<div style="left:1057.5px;top:343.8px;width:8.5px;height:1.1px;background:rgba(255,255,255,0.75);"></div>
<div style="left:1021px;top:347.8px;width:9.3px;height:1.1px;background:rgba(255,255,255,0.75);"></div>
<div style="left:1031.6px;top:347.8px;width:9.1px;height:1.1px;background:rgba(255,255,255,0.75);"></div>
<div style="left:1042.1px;top:347.8px;width:13.6px;height:1.1px;background:rgba(255,255,255,0.75);"></div>
<div style="left:1057.0px;top:347.8px;width:9.0px;height:1.1px;background:rgba(255,255,255,0.75);"></div>
<div style="left:1021px;top:355.9px;width:13.3px;height:1.1px;background:rgba(255,255,255,0.75);"></div>
<div style="left:1035.6px;top:355.9px;width:5.1px;height:1.1px;background:rgba(255,255,255,0.75);"></div>
<div style="left:1042.0px;top:355.9px;width:7.7px;height:1.1px;background:rgba(255,255,255,0.75);"></div>
<div style="left:1051.0px;top:355.9px;width:7.9px;height:1.1px;background:rgba(255,255,255,0.75);"></div>
<div style="left:1004.5px;top:364.7px;height:11px;line-height:11px;font-family:'Liberation Mono',monospace;font-size:10.8px;color:#333333;transform:scaleX(0.72);transform-origin:0 0;-webkit-text-stroke:0.3px #333333;">[9]</div>
<div style="left:1021px;top:366.6px;width:13.4px;height:1.1px;background:rgba(90,80,130,0.30);"></div>
<div style="left:1035.7px;top:366.6px;width:7.1px;height:1.1px;background:rgba(90,80,130,0.30);"></div>
<div style="left:1044.1px;top:366.6px;width:2.9px;height:1.1px;background:rgba(90,80,130,0.30);"></div>
<div style="left:1021px;top:370.7px;width:8.9px;height:1.1px;background:rgba(90,80,130,0.30);"></div>
<div style="left:1031.2px;top:370.7px;width:7.7px;height:1.1px;background:rgba(90,80,130,0.30);"></div>
<div style="left:1040.1px;top:370.7px;width:10.3px;height:1.1px;background:rgba(90,80,130,0.30);"></div>
<div style="left:1051.7px;top:370.7px;width:8.5px;height:1.1px;background:rgba(90,80,130,0.30);"></div>
<div style="left:1061.5px;top:370.7px;width:4.5px;height:1.1px;background:rgba(90,80,130,0.30);"></div>
<div style="left:1037px;top:374.7px;width:13.9px;height:1.1px;background:rgba(90,80,130,0.30);"></div>
<div style="left:1052.2px;top:374.7px;width:10.8px;height:1.1px;background:rgba(90,80,130,0.30);"></div>
<div style="left:1064.3px;top:374.7px;width:1.3px;height:1.1px;background:rgba(90,80,130,0.30);"></div>
<div style="left:1037px;top:378.8px;width:5.4px;height:1.1px;background:rgba(90,80,130,0.30);"></div>
<div style="left:1043.7px;top:378.8px;width:10.9px;height:1.1px;background:rgba(90,80,130,0.30);"></div>
<div style="left:1055.9px;top:378.8px;width:7.6px;height:1.1px;background:rgba(90,80,130,0.30);"></div>
<div style="left:1064.8px;top:378.8px;width:0.8px;height:1.1px;background:rgba(90,80,130,0.30);"></div>
<div style="left:1037px;top:382.8px;width:11.4px;height:1.1px;background:rgba(90,80,130,0.30);"></div>
<div style="left:1049.7px;top:382.8px;width:13.1px;height:1.1px;background:rgba(90,80,130,0.30);"></div>
<div style="left:1064.1px;top:382.8px;width:1.5px;height:1.1px;background:rgba(90,80,130,0.30);"></div>
<div style="left:1037px;top:386.9px;width:11.2px;height:1.1px;background:rgba(90,80,130,0.30);"></div>
<div style="left:1049.5px;top:386.9px;width:8.1px;height:1.1px;background:rgba(90,80,130,0.30);"></div>
<div style="left:1058.9px;top:386.9px;width:6.7px;height:1.1px;background:rgba(90,80,130,0.30);"></div>
<div style="left:1037px;top:390.9px;width:5.0px;height:1.1px;background:rgba(90,80,130,0.30);"></div>
<div style="left:1043.3px;top:390.9px;width:13.9px;height:1.1px;background:rgba(90,80,130,0.30);"></div>
<div style="left:1058.6px;top:390.9px;width:7.0px;height:1.1px;background:rgba(90,80,130,0.30);"></div>
<div style="left:1004.5px;top:399.7px;height:11px;line-height:11px;font-family:'Liberation Mono',monospace;font-size:10.8px;color:#333333;transform:scaleX(0.72);transform-origin:0 0;-webkit-text-stroke:0.3px #333333;">[10]</div>
<div style="left:1026px;top:401.6px;width:12.0px;height:1.1px;background:rgba(90,80,130,0.30);"></div>
<div style="left:1039.3px;top:401.6px;width:4.9px;height:1.1px;background:rgba(90,80,130,0.30);"></div>
<div style="left:1026px;top:405.7px;width:12.2px;height:1.1px;background:rgba(90,80,130,0.30);"></div>
<div style="left:1039.5px;top:405.7px;width:4.7px;height:1.1px;background:rgba(90,80,130,0.30);"></div>
<div style="left:1030px;top:413.8px;width:9.5px;height:1.1px;background:rgba(90,80,130,0.30);"></div>
<div style="left:1040.8px;top:413.8px;width:8.2px;height:1.1px;background:rgba(90,80,130,0.30);"></div>
<div style="left:1050.3px;top:413.8px;width:11.5px;height:1.1px;background:rgba(90,80,130,0.30);"></div>
<div style="left:1063.1px;top:413.8px;width:2.9px;height:1.1px;background:rgba(90,80,130,0.30);"></div>
<div style="left:1034px;top:417.8px;width:8.8px;height:1.1px;background:rgba(90,80,130,0.30);"></div>
<div style="left:1044.1px;top:417.8px;width:13.8px;height:1.1px;background:rgba(90,80,130,0.30);"></div>
<div style="left:1059.2px;top:417.8px;width:6.8px;height:1.1px;background:rgba(90,80,130,0.30);"></div>
<div style="left:1034px;top:421.9px;width:9.3px;height:1.1px;background:rgba(90,80,130,0.30);"></div>
<div style="left:1044.6px;top:421.9px;width:13.1px;height:1.1px;background:rgba(90,80,130,0.30);"></div>
<div style="left:1059.1px;top:421.9px;width:6.1px;height:1.1px;background:rgba(90,80,130,0.30);"></div>
<div style="left:1034px;top:425.9px;width:8.1px;height:1.1px;background:rgba(90,80,130,0.30);"></div>
<div style="left:1043.4px;top:425.9px;width:7.1px;height:1.1px;background:rgba(90,80,130,0.30);"></div>
<div style="left:1051.8px;top:425.9px;width:0.4px;height:1.1px;background:rgba(90,80,130,0.30);"></div>
<div style="left:1004.5px;top:434.7px;height:11px;line-height:11px;font-family:'Liberation Mono',monospace;font-size:10.8px;color:#333333;transform:scaleX(0.72);transform-origin:0 0;-webkit-text-stroke:0.3px #333333;">[11]</div>
<div style="left:1026px;top:436.6px;width:13.8px;height:1.1px;background:rgba(90,80,130,0.30);"></div>
<div style="left:1041.1px;top:436.6px;width:11.4px;height:1.1px;background:rgba(90,80,130,0.30);"></div>
<div style="left:1053.8px;top:436.6px;width:7.0px;height:1.1px;background:rgba(90,80,130,0.30);"></div>
<div style="left:1062.1px;top:436.6px;width:3.9px;height:1.1px;background:rgba(90,80,130,0.30);"></div>
<div style="left:1030px;top:440.7px;width:8.2px;height:1.1px;background:rgba(90,80,130,0.30);"></div>
<div style="left:1039.5px;top:440.7px;width:14.0px;height:1.1px;background:rgba(90,80,130,0.30);"></div>
<div style="left:1054.8px;top:440.7px;width:8.3px;height:1.1px;background:rgba(90,80,130,0.30);"></div>
<div style="left:1064.4px;top:440.7px;width:1.6px;height:1.1px;background:rgba(90,80,130,0.30);"></div>
<div style="left:1030px;top:444.7px;width:11.6px;height:1.1px;background:rgba(90,80,130,0.30);"></div>
<div style="left:1042.9px;top:444.7px;width:6.2px;height:1.1px;background:rgba(90,80,130,0.30);"></div>
<div style="left:1050.4px;top:444.7px;width:11.2px;height:1.1px;background:rgba(90,80,130,0.30);"></div>
<div style="left:1062.9px;top:444.7px;width:3.1px;height:1.1px;background:rgba(90,80,130,0.30);"></div>
<div style="left:1030px;top:448.8px;width:8.6px;height:1.1px;background:rgba(90,80,130,0.30);"></div>
<div style="left:1039.9px;top:448.8px;width:9.3px;height:1.1px;background:rgba(90,80,130,0.30);"></div>
<div style="left:1050.5px;top:448.8px;width:9.2px;height:1.1px;background:rgba(90,80,130,0.30);"></div>
<div style="left:1061.0px;top:448.8px;width:5.0px;height:1.1px;background:rgba(90,80,130,0.30);"></div>
<div style="left:1030px;top:452.8px;width:7.3px;height:1.1px;background:rgba(90,80,130,0.30);"></div>
<div style="left:1038.6px;top:452.8px;width:13.5px;height:1.1px;background:rgba(90,80,130,0.30);"></div>
<div style="left:1053.4px;top:452.8px;width:5.9px;height:1.1px;background:rgba(90,80,130,0.30);"></div>
<div style="left:1060.6px;top:452.8px;width:5.4px;height:1.1px;background:rgba(90,80,130,0.30);"></div>
<div style="left:1004.5px;top:469.7px;height:11px;line-height:11px;font-family:'Liberation Mono',monospace;font-size:10.8px;color:#333333;transform:scaleX(0.72);transform-origin:0 0;-webkit-text-stroke:0.3px #333333;">[12]</div>
<div style="left:1026px;top:471.6px;width:13.6px;height:1.1px;background:rgba(90,80,130,0.30);"></div>
<div style="left:1040.9px;top:471.6px;width:3.3px;height:1.1px;background:rgba(90,80,130,0.30);"></div>
<div style="left:1026px;top:475.7px;width:6.7px;height:1.1px;background:rgba(90,80,130,0.30);"></div>
<div style="left:1034.0px;top:475.7px;width:8.3px;height:1.1px;background:rgba(90,80,130,0.30);"></div>
<div style="left:1043.7px;top:475.7px;width:8.3px;height:1.1px;background:rgba(90,80,130,0.30);"></div>
<div style="left:1026px;top:479.7px;width:7.8px;height:1.1px;background:rgba(90,80,130,0.30);"></div>
<div style="left:1035.1px;top:479.7px;width:9.2px;height:1.1px;background:rgba(90,80,130,0.30);"></div>
<div style="left:1045.6px;top:479.7px;width:12.9px;height:1.1px;background:rgba(90,80,130,0.30);"></div>
<div style="left:1059.8px;top:479.7px;width:6.2px;height:1.1px;background:rgba(90,80,130,0.30);"></div>
<div style="left:1026px;top:483.8px;width:12.3px;height:1.1px;background:rgba(90,80,130,0.30);"></div>
<div style="left:1039.6px;top:483.8px;width:2.0px;height:1.1px;background:rgba(90,80,130,0.30);"></div>
<div style="left:1026px;top:487.8px;width:8.4px;height:1.1px;background:rgba(90,80,130,0.30);"></div>
<div style="left:1035.7px;top:487.8px;width:3.3px;height:1.1px;background:rgba(90,80,130,0.30);"></div>
<div style="left:1026px;top:491.9px;width:10.9px;height:1.1px;background:rgba(90,80,130,0.30);"></div>
<div style="left:1038.2px;top:491.9px;width:6.0px;height:1.1px;background:rgba(90,80,130,0.30);"></div>
<div style="left:1026px;top:495.9px;width:8.0px;height:1.1px;background:rgba(90,80,130,0.30);"></div>
<div style="left:1035.3px;top:495.9px;width:8.9px;height:1.1px;background:rgba(90,80,130,0.30);"></div>
<div style="left:1004.5px;top:504.7px;height:11px;line-height:11px;font-family:'Liberation Mono',monospace;font-size:10.8px;color:#333333;transform:scaleX(0.72);transform-origin:0 0;-webkit-text-stroke:0.3px #333333;">[*]</div>
<div style="left:1021px;top:506.6px;width:8.2px;height:1.1px;background:rgba(90,80,130,0.30);"></div>
<div style="left:1030.5px;top:506.6px;width:8.5px;height:1.1px;background:rgba(90,80,130,0.30);"></div>
<div style="left:1040.4px;top:506.6px;width:1.4px;height:1.1px;background:rgba(90,80,130,0.30);"></div>
<div style="left:1021px;top:510.7px;width:12.5px;height:1.1px;background:rgba(90,80,130,0.30);"></div>
<div style="left:1034.8px;top:510.7px;width:9.5px;height:1.1px;background:rgba(90,80,130,0.30);"></div>
<div style="left:1045.6px;top:510.7px;width:7.9px;height:1.1px;background:rgba(90,80,130,0.30);"></div>
<div style="left:1054.8px;top:510.7px;width:6.1px;height:1.1px;background:rgba(90,80,130,0.30);"></div>
<div style="left:1062.2px;top:510.7px;width:3.8px;height:1.1px;background:rgba(90,80,130,0.30);"></div>
<div style="left:1021px;top:514.7px;width:12.5px;height:1.1px;background:rgba(90,80,130,0.30);"></div>
<div style="left:1034.8px;top:514.7px;width:6.1px;height:1.1px;background:rgba(90,80,130,0.30);"></div>
<div style="left:1042.3px;top:514.7px;width:9.6px;height:1.1px;background:rgba(90,80,130,0.30);"></div>
<div style="left:1053.1px;top:514.7px;width:1.7px;height:1.1px;background:rgba(90,80,130,0.30);"></div>
<div style="left:1021px;top:518.8px;width:8.3px;height:1.1px;background:rgba(90,80,130,0.30);"></div>
<div style="left:1030.6px;top:518.8px;width:12.9px;height:1.1px;background:rgba(90,80,130,0.30);"></div>
<div style="left:1044.8px;top:518.8px;width:10.0px;height:1.1px;background:rgba(90,80,130,0.30);"></div>
<div style="left:1021px;top:526.9px;width:6.5px;height:1.1px;background:rgba(90,80,130,0.30);"></div>
<div style="left:1028.8px;top:526.9px;width:8.6px;height:1.1px;background:rgba(90,80,130,0.30);"></div>
<div style="left:1038.7px;top:526.9px;width:0.5px;height:1.1px;background:rgba(90,80,130,0.30);"></div>
<div style="left:1021px;top:530.9px;width:12.1px;height:1.1px;background:rgba(90,80,130,0.30);"></div>
<div style="left:1034.4px;top:530.9px;width:9.3px;height:1.1px;background:rgba(90,80,130,0.30);"></div>
<div style="left:1045.0px;top:530.9px;width:5.9px;height:1.1px;background:rgba(90,80,130,0.30);"></div>
<div style="left:1052.2px;top:530.9px;width:6.5px;height:1.1px;background:rgba(90,80,130,0.30);"></div>
<div style="left:1060.0px;top:530.9px;width:6.0px;height:1.1px;background:rgba(90,80,130,0.30);"></div>
<div style="left:1077px;top:28px;width:250px;height:549px;background:#ffffff;"></div>
<div style="left:1076px;top:28px;width:1px;height:549px;background:#bdbdbd;"></div>
<div style="left:1089.7px;top:31.19px;height:20px;line-height:20px;font-family:'Liberation Sans', sans-serif;font-size:11px;color:#212121;font-weight:bold;letter-spacing:1.35px;white-space:pre;text-align:left;">MAIN.IPYNB</div>
<div style="left:1077px;top:54px;width:250px;height:1px;background:#d4d4d4;"></div>
<svg style="left:1084px;top:69px;" width="7" height="4" viewBox="0 0 7 4"><path d="M0 0 H7 L3.5 4 Z" fill="#616161"/></svg>
<div style="left:1095.5px;top:60.06px;height:20px;line-height:20px;font-family:'Liberation Sans', sans-serif;font-size:10.5px;color:#212121;font-weight:bold;letter-spacing:0px;white-space:pre;text-align:left;">VARIABLES</div>
<div style="left:1191.5px;top:61.46px;height:20px;line-height:20px;font-family:'Liberation Sans', sans-serif;font-size:12.8px;color:#212121;font-weight:normal;letter-spacing:0px;white-space:pre;text-align:left;">Locals</div>
<svg style="left:1249px;top:68px;" width="9" height="6" viewBox="0 0 9 6"><path d="M0.6 0.6 L4.5 4.6 L8.4 0.6" stroke="#424242" stroke-width="1.2" fill="none"/></svg>
<svg style="left:1269px;top:60px;" width="21" height="21" viewBox="0 0 21 21"><rect x="1" y="1" width="19" height="19" rx="2.2" fill="#f7f7f7" stroke="#7d7d7d" stroke-width="1.8"/><rect x="4.3" y="5" width="4.4" height="4" fill="#616161"/><rect x="12" y="5" width="5.4" height="4.4" fill="#616161"/><rect x="12" y="12.4" width="5.4" height="4.6" fill="#616161"/><path d="M8.5 7 H12 M9.8 7 V14.7 H12" stroke="#616161" stroke-width="1.2" fill="none"/></svg>
<svg style="left:1303px;top:66px;" width="12" height="10" viewBox="0 0 12 10"><rect x="0" y="0" width="12" height="2" fill="#616161"/><rect x="0" y="4" width="12" height="2" fill="#616161"/><rect x="0" y="8" width="12" height="2" fill="#616161"/></svg>
<div style="left:1077px;top:86px;width:250px;height:1px;background:#d4d4d4;"></div>
<svg style="left:1091px;top:98px;" width="6" height="9" viewBox="0 0 6 9"><path d="M0 0 L6 4.5 L0 9 Z" fill="#616161"/></svg>
<div style="left:1105.6px;top:92.82px;height:20px;line-height:20px;font-family:'Liberation Sans', sans-serif;font-size:13.5px;color:#1a1ad6;font-weight:normal;letter-spacing:0px;white-space:pre;text-align:left;">self:</div>
<div style="left:1136px;top:92.93px;height:20px;line-height:20px;font-family:'Liberation Sans', sans-serif;font-size:13.2px;color:#c62828;font-weight:normal;letter-spacing:0px;white-space:pre;text-align:left;">PPNet</div>
<svg style="left:1091px;top:123px;" width="6" height="9" viewBox="0 0 6 9"><path d="M0 0 L6 4.5 L0 9 Z" fill="#616161"/></svg>
<div style="left:1105.6px;top:117.82px;height:20px;line-height:20px;font-family:'Liberation Sans', sans-serif;font-size:13.5px;color:#1a1ad6;font-weight:normal;letter-spacing:0px;white-space:pre;text-align:left;">x:</div>
<div style="left:1120.5px;top:117.93px;height:20px;line-height:20px;font-family:'Liberation Sans', sans-serif;font-size:13.2px;color:#c62828;font-weight:normal;letter-spacing:0px;white-space:pre;text-align:left;">Tensor</div>
<div style="left:1077px;top:169px;width:250px;height:1px;background:#dcdcdc;"></div>
<svg style="left:1084px;top:184px;" width="7" height="4" viewBox="0 0 7 4"><path d="M0 0 H7 L3.5 4 Z" fill="#616161"/></svg>
<div style="left:1095.6px;top:175.23px;height:20px;line-height:20px;font-family:'Liberation Sans', sans-serif;font-size:10.6px;color:#212121;font-weight:bold;letter-spacing:0px;white-space:pre;text-align:left;">CALLST...</div>
<svg style="left:1161px;top:181px;" width="8" height="11" viewBox="0 0 8 11"><path d="M0 0 L8 5.5 L0 11 Z" fill="#616161"/></svg>
<div style="left:1189px;top:182px;width:8px;height:8px;background:#616161;"></div>
<svg style="left:1215px;top:179px;" width="14" height="14" viewBox="0 0 14 14"><path d="M1.5 7 A5 5 0 0 1 11 4.5" stroke="#616161" stroke-width="1.5" fill="none"/><path d="M8.4 4.6 L12.6 5.5 L12.4 1.2 Z" fill="#616161"/><circle cx="6.8" cy="12" r="2" fill="#616161"/></svg>
<svg style="left:1246px;top:179px;" width="10" height="14" viewBox="0 0 10 14"><path d="M5 0 V7.5 M1.4 4.5 L5 8 L8.6 4.5" stroke="#616161" stroke-width="1.5" fill="none"/><circle cx="5" cy="12" r="2" fill="#616161"/></svg>
<svg style="left:1275px;top:179px;" width="10" height="14" viewBox="0 0 10 14"><path d="M5 1 V8.5 M1.4 4.5 L5 1 L8.6 4.5" stroke="#616161" stroke-width="1.5" fill="none"/><circle cx="5" cy="12" r="2" fill="#616161"/></svg>
<svg style="left:1303px;top:181px;" width="12" height="10" viewBox="0 0 12 10"><path d="M4 1 L0.8 5 L4 9 M8 1 L11.2 5 L8 9" stroke="#616161" stroke-width="1.2" fill="none"/></svg>
<div style="left:1077px;top:201px;width:250px;height:1px;background:#d4d4d4;"></div>
<div style="left:1077px;top:202px;width:235px;height:63px;overflow:hidden;">
<div style="left:0;top:3px;width:235px;height:26px;background:#1976d2;"></div>
<div style="left:8px;top:5.88px;height:20px;line-height:20px;font-size:13.9px;color:#ffffff;white-space:pre;">f_conv_layer ipykernel_325118/3984490851.py</div>
<div style="left:8px;top:31.98px;height:20px;line-height:20px;font-size:13.9px;color:#212121;white-space:pre;">forward ipykernel_325118/3984490851.py</div>
<div style="left:8px;top:58.08px;height:20px;line-height:20px;font-size:13.9px;color:#212121;white-space:pre;">run_code interactiveshell.py 3577</div>
</div>
<svg style="left:1314px;top:210px;" width="10" height="6" viewBox="0 0 10 6"><path d="M0 6 L5 0.5 L10 6 Z" fill="#a3a3a3"/></svg>
<div style="left:1315.5px;top:223px;width:8.5px;height:18px;background:#8a8a8a;border-radius:4px;"></div>
<svg style="left:1314px;top:254px;" width="10" height="6" viewBox="0 0 10 6"><path d="M0 0 L5 5.5 L10 0 Z" fill="#a3a3a3"/></svg>
<div style="left:1077px;top:265px;width:235px;height:17px;background:#f6f6f6;"></div>
<svg style="left:1081px;top:270px;" width="6" height="9" viewBox="0 0 6 9"><path d="M6 0 L0.5 4.5 L6 9 Z" fill="#a3a3a3"/></svg>
<div style="left:1095px;top:269px;width:145px;height:9px;background:#8a8a8a;border-radius:4.5px;"></div>
<svg style="left:1300px;top:270px;" width="6" height="9" viewBox="0 0 6 9"><path d="M0 0 L5.5 4.5 L0 9 Z" fill="#a3a3a3"/></svg>
<div style="left:1077px;top:284px;width:250px;height:1px;background:#d4d4d4;"></div>
<svg style="left:1084px;top:299px;" width="7" height="4" viewBox="0 0 7 4"><path d="M0 0 H7 L3.5 4 Z" fill="#616161"/></svg>
<div style="left:1095.6px;top:290.53px;height:20px;line-height:20px;font-family:'Liberation Sans', sans-serif;font-size:10.6px;color:#212121;font-weight:bold;letter-spacing:0px;white-space:pre;text-align:left;">BREAKPOINTS</div>
<svg style="left:1272px;top:294px;" width="16" height="15" viewBox="0 0 16 15"><path d="M8 1 L15.3 14.3 H0.7 Z" fill="none" stroke="#616161" stroke-width="1.2"/><path d="M8 5.2 V10" stroke="#616161" stroke-width="1.5"/><circle cx="8" cy="12" r="0.9" fill="#616161"/></svg>
<svg style="left:1301px;top:294px;" width="15" height="14" viewBox="0 0 15 14"><circle cx="10" cy="5" r="4.2" fill="#616161" stroke="#fff" stroke-width="0.8"/><circle cx="7.8" cy="7.2" r="4.5" fill="#616161" stroke="#fff" stroke-width="0.8"/><circle cx="5.2" cy="9.2" r="4.6" fill="#616161" stroke="#fff" stroke-width="0.8"/></svg>
<div style="left:1077px;top:316px;width:250px;height:1px;background:#d4d4d4;"></div>
<div style="left:1088.5px;top:339.5px;width:9.5px;height:9.5px;background:#d32f2f;border-radius:50%;"></div>
<div style="left:1111px;top:332.72px;height:20px;line-height:20px;font-family:'Liberation Sans', sans-serif;font-size:13.8px;color:#212121;font-weight:normal;letter-spacing:0px;white-space:pre;text-align:left;">...rnel_325118/3984490851.py 70</div>
<div style="left:1077px;top:400px;width:250px;height:1px;background:#dcdcdc;"></div>
<svg style="left:1084px;top:415px;" width="7" height="4" viewBox="0 0 7 4"><path d="M0 0 H7 L3.5 4 Z" fill="#616161"/></svg>
<div style="left:1095.6px;top:406.33px;height:20px;line-height:20px;font-family:'Liberation Sans', sans-serif;font-size:10.6px;color:#212121;font-weight:bold;letter-spacing:0px;white-space:pre;text-align:left;">S</div>
<svg style="left:1109px;top:410px;" width="14" height="14" viewBox="0 0 14 14"><path d="M3 0.5 H9 L13 4.5 V12.5 a1 1 0 0 1 -1 1 H4 a1 1 0 0 1 -1 -1 V9 H0 V7 H3 Z" fill="#616161"/><path d="M6.5 6 H10.5 M6.5 8.5 H10.5 M6.5 11 H10.5" stroke="#fff" stroke-width="1"/><path d="M0 8 H5 M3.5 6.3 L5.3 8 L3.5 9.7" stroke="#616161" stroke-width="1" fill="none"/></svg>
<div style="left:1131.9px;top:406.70px;height:20px;line-height:20px;font-family:'Liberation Sans', sans-serif;font-size:10.1px;color:#212121;font-weight:normal;letter-spacing:-0.19px;white-space:pre;text-align:left;-webkit-text-stroke:0.35px #212121;">/TMP/IPYKERNEL_325118/3984490851.PY</div>
<div style="left:1077px;top:432px;width:250px;height:1px;background:#d4d4d4;"></div>
<div style="left:1077px;top:436px;width:235px;height:80px;background:#eeeeee;"></div>
<div style="left:1122px;top:436px;width:1px;height:80px;background:#dcdcdc;"></div>
<div class="cl" style="left:1077px;top:441.23px;width:42px;text-align:right;color:#757575;">1</div>
<div class="cl" style="left:1130px;top:441.23px;"><span class="k">import</span> torch</div>
<div class="cl" style="left:1077px;top:459.43px;width:42px;text-align:right;color:#757575;">2</div>
<div class="cl" style="left:1130px;top:459.43px;"><span class="k">import</span> torch.nn <span class="k">as</span> nn</div>
<div class="cl" style="left:1077px;top:477.63px;width:42px;text-align:right;color:#757575;">3</div>
<div class="cl" style="left:1130px;top:477.63px;"><span class="k">import</span></div>
<div class="cl" style="left:1077px;top:495.83px;width:42px;text-align:right;color:#757575;"></div>
<div class="cl" style="left:1130px;top:495.83px;">torch.utils.model_zoo <span class="k">as</span></div>
<svg style="left:1314px;top:441px;" width="10" height="6" viewBox="0 0 10 6"><path d="M0 6 L5 0.5 L10 6 Z" fill="#a3a3a3"/></svg>
<div style="left:1315.5px;top:454px;width:8.5px;height:16px;background:#8a8a8a;border-radius:4px;"></div>
<svg style="left:1314px;top:502px;" width="10" height="6" viewBox="0 0 10 6"><path d="M0 0 L5 5.5 L10 0 Z" fill="#a3a3a3"/></svg>
<div style="left:1077px;top:516px;width:250px;height:1px;background:#ffffff;"></div>
<svg style="left:1084px;top:530px;" width="7" height="4" viewBox="0 0 7 4"><path d="M0 0 H7 L3.5 4 Z" fill="#616161"/></svg>
<div style="left:1095.6px;top:521.13px;height:20px;line-height:20px;font-family:'Liberation Sans', sans-serif;font-size:10.6px;color:#212121;font-weight:bold;letter-spacing:0px;white-space:pre;text-align:left;">KERNEL SOURCES</div>
<svg style="left:1273px;top:526px;" width="14" height="13" viewBox="0 0 14 13"><circle cx="5.3" cy="5.3" r="4.3" fill="none" stroke="#616161" stroke-width="1.5"/><path d="M8.5 8.5 L13 12.5" stroke="#616161" stroke-width="1.7"/></svg>
<svg style="left:1303.4px;top:526.5px;" width="11.599999999999909" height="12.0" viewBox="4 4 16 16" preserveAspectRatio="none"><path d="M17.65 6.35A7.958 7.958 0 0 0 12 4c-4.42 0-7.99 3.58-7.99 8s3.57 8 7.99 8c3.73 0 6.84-2.55 7.73-6h-2.08A5.99 5.99 0 0 1 12 18c-3.31 0-6-2.69-6-6s2.69-6 6-6c1.66 0 3.14.69 4.22 1.78L13 11h7V4l-2.35 2.35z" fill="#616161" /></svg>
<div style="left:1077px;top:547px;width:250px;height:1px;background:#d4d4d4;"></div>
<div style="left:1077px;top:548px;width:235px;height:13px;overflow:hidden;">
<svg style="position:absolute;left:4px;top:3px;" width="14" height="12"><rect x="1" y="1" width="9" height="9" rx="1" fill="#616161"/><rect x="6" y="4" width="7" height="7" fill="#616161" stroke="#fff" stroke-width="0.8"/></svg>
<div style="left:20px;top:2px;height:20px;line-height:20px;font-size:13.9px;color:#212121;">IPython</div>
</div>
<svg style="left:1314px;top:549px;" width="10" height="5" viewBox="0 0 10 5"><path d="M0 5 L5 0 L10 5 Z" fill="#a3a3a3"/></svg>
<svg style="left:1314px;top:557px;" width="10" height="5" viewBox="0 0 10 5"><path d="M0 0 L5 5 L10 0 Z" fill="#a3a3a3"/></svg>
<div style="left:1077px;top:561px;width:235px;height:16px;background:#f6f6f6;"></div>
<svg style="left:1081px;top:565px;" width="6" height="9" viewBox="0 0 6 9"><path d="M6 0 L0.5 4.5 L6 9 Z" fill="#a3a3a3"/></svg>
<div style="left:1095px;top:565px;width:100px;height:9px;background:#8a8a8a;border-radius:4.5px;"></div>
<svg style="left:1300px;top:565px;" width="6" height="9" viewBox="0 0 6 9"><path d="M0 0 L5.5 4.5 L0 9 Z" fill="#a3a3a3"/></svg>
<div style="left:1327px;top:28px;width:33px;height:52px;background:#eeeeee;"></div>
<div style="left:1327px;top:28px;width:1px;height:52px;background:#bdbdbd;"></div>
<div style="left:1327px;top:80px;width:33px;height:1px;background:#bdbdbd;"></div>
<div style="left:1327px;top:134px;width:33px;height:443px;background:#eeeeee;"></div>
<div style="left:1327px;top:134px;width:33px;height:1px;background:#bdbdbd;"></div>
<div style="left:1327px;top:134px;width:1px;height:443px;background:#bdbdbd;"></div>
<svg style="left:1335px;top:44.7px;" width="19" height="19" viewBox="0 0 19 19"><circle cx="4.3" cy="4.6" r="2.5" fill="#616161"/><rect x="3.3" y="1.0999999999999996" width="2.0" height="7.0" fill="#616161" transform="rotate(0 4.3 4.6)"/><rect x="3.3" y="1.0999999999999996" width="2.0" height="7.0" fill="#616161" transform="rotate(60 4.3 4.6)"/><rect x="3.3" y="1.0999999999999996" width="2.0" height="7.0" fill="#616161" transform="rotate(120 4.3 4.6)"/><circle cx="4.3" cy="4.6" r="1.0" fill="#eeeeee"/><circle cx="11.3" cy="11.8" r="4.2" fill="#616161"/><rect x="9.9" y="6.200000000000001" width="2.8" height="11.2" fill="#616161" transform="rotate(0 11.3 11.8)"/><rect x="9.9" y="6.200000000000001" width="2.8" height="11.2" fill="#616161" transform="rotate(60 11.3 11.8)"/><rect x="9.9" y="6.200000000000001" width="2.8" height="11.2" fill="#616161" transform="rotate(120 11.3 11.8)"/><circle cx="11.3" cy="11.8" r="1.8" fill="#eeeeee"/></svg>
<svg style="left:1336px;top:98px;" width="16" height="17" viewBox="0 0 16 17"><g fill="#616161"><rect x="3.8" y="4.3" width="8.8" height="6" rx="2"/><ellipse cx="8.2" cy="10.8" rx="4.4" ry="5.2"/></g><g stroke="#616161" stroke-width="1.5" fill="none"><path d="M1 6.2 H15.2 M1 9.8 H15.2 M1 12.9 H15.2"/><path d="M3.8 2.9 H5 L6.2 4.6 M12.6 2.9 H11.4 L10.2 4.6"/></g><rect x="5.9" y="7.4" width="4.2" height="1.6" fill="#fff"/><rect x="5.9" y="10.7" width="4.2" height="1.6" fill="#fff"/></svg>
<div style="left:2px;top:577px;width:1358px;height:24px;background:#eeeeee;"></div>
<div style="left:30.4px;top:578.95px;height:20px;line-height:20px;font-family:'Liberation Sans', sans-serif;font-size:13.7px;color:#212121;font-weight:normal;letter-spacing:0px;white-space:pre;text-align:left;">Simple</div>
<div style="left:77px;top:581px;width:35px;height:16px;background:#bdbdbd;border-radius:8px;"></div>
<div style="left:79.5px;top:583.5px;width:11px;height:11px;background:#ffffff;border-radius:50%;"></div>
<div style="left:139.5px;top:578.95px;height:20px;line-height:20px;font-family:'Liberation Sans', sans-serif;font-size:13.7px;color:#212121;font-weight:normal;letter-spacing:0px;white-space:pre;text-align:left;">1</div>
<svg style="left:157px;top:582px;" width="14" height="14" viewBox="0 0 14 14"><rect x="2.5" y="2.5" width="9" height="9" rx="1" fill="none" stroke="#616161" stroke-width="1.5"/><rect x="5" y="5" width="4" height="4" fill="#616161"/><path d="M5 0 V2.5 M9 0 V2.5 M5 11.5 V14 M9 11.5 V14 M0 5 H2.5 M0 9 H2.5 M11.5 5 H14 M11.5 9 H14" stroke="#616161" stroke-width="1.3"/></svg>
<svg style="left:200px;top:581px;" width="16" height="16" viewBox="0 0 16 16"><g transform="scale(0.8)"><path d="M10 0.6 L19.4 10 L10 19.4 L0.6 10 Z" fill="#616161" stroke="#616161" stroke-width="1" stroke-linejoin="round"/><path d="M6.8 2.8 L10 6 V14.2 M10 6 L14.2 10.2" stroke="#eeeeee" stroke-width="1.4" fill="none"/><circle cx="10" cy="6" r="1.2" fill="#eee"/><circle cx="10" cy="14.2" r="1.8" fill="#eee"/><circle cx="14.2" cy="10.2" r="1.8" fill="#eee"/></g></svg>
<div style="left:222.5px;top:578.95px;height:20px;line-height:20px;font-family:'Liberation Sans', sans-serif;font-size:13.7px;color:#212121;font-weight:normal;letter-spacing:0px;white-space:pre;text-align:left;">master</div>
<div style="left:281px;top:578.83px;height:20px;line-height:20px;font-family:'Liberation Sans', sans-serif;font-size:14.05px;color:#212121;font-weight:normal;letter-spacing:0px;white-space:pre;text-align:left;">Python 3 (ipykernel) | Idle</div>
<div style="left:1005.9px;top:578.85px;height:20px;line-height:20px;font-family:'Liberation Sans', sans-serif;font-size:14px;color:#212121;font-weight:normal;letter-spacing:0px;white-space:pre;text-align:left;">Mode: Edit</div>
<svg style="left:1091px;top:581px;" width="16" height="17" viewBox="0 0 16 17"><path d="M8 1 L14.5 3.5 V8.2 C14.5 12 11.5 14.8 8 16 C4.5 14.8 1.5 12 1.5 8.2 V3.5 Z" fill="none" stroke="#616161" stroke-width="1.4"/><path d="M4.8 8.4 L7.2 10.8 L11.3 6.3" fill="none" stroke="#616161" stroke-width="1.4"/></svg>
<div style="left:1125px;top:579.04px;height:20px;line-height:20px;font-family:'Liberation Sans', sans-serif;font-size:13.45px;color:#212121;font-weight:normal;letter-spacing:0px;white-space:pre;text-align:left;">Ln 65, Col 58</div>
<div style="left:1221.8px;top:578.83px;height:20px;line-height:20px;font-family:'Liberation Sans', sans-serif;font-size:14.05px;color:#212121;font-weight:normal;letter-spacing:0px;white-space:pre;text-align:left;">main.ipynb</div>
<div style="left:1300px;top:577px;width:48px;height:24px;background:#1976d2;"></div>
<div style="left:1307.6px;top:578.85px;height:20px;line-height:20px;font-family:'Liberation Sans', sans-serif;font-size:14px;color:#ffffff;font-weight:normal;letter-spacing:0px;white-space:pre;text-align:left;">1</div>
<svg style="left:1323px;top:580px;" width="19" height="19" viewBox="0 0 19 19"><path d="M9.5 1.5 C13.5 1.5 15 4.8 15 8.5 V12.5 L17.5 15.5 H1.5 L4 12.5 V8.5 C4 4.8 5.5 1.5 9.5 1.5 Z" fill="none" stroke="#fff" stroke-width="1.6"/><path d="M7.3 17 a2.2 2.2 0 0 0 4.4 0" fill="none" stroke="#fff" stroke-width="1.6"/></svg>
</body></html>
